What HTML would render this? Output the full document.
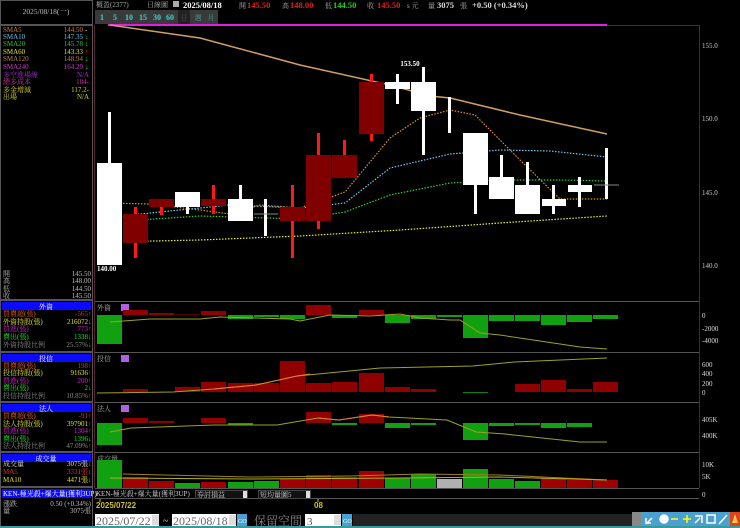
<!DOCTYPE html><html><head><meta charset="utf-8"><style>
html,body{margin:0;padding:0;background:#000;width:740px;height:528px;overflow:hidden}
svg{display:block}
text{font-family:"Liberation Serif","Noto Serif CJK SC","Noto Sans CJK TC",serif}
.s{font-size:7px}
.b{font-family:"Liberation Sans","Noto Sans CJK TC",sans-serif;font-weight:bold}
</style></head><body>
<svg width="740" height="528" viewBox="0 0 740 528" xmlns="http://www.w3.org/2000/svg">
<rect width="740" height="528" fill="#000"/>
<g fill="none" stroke="#555" stroke-width="1">
<rect x="0.5" y="0.5" width="92" height="24"/>
<rect x="0.5" y="25.5" width="92" height="274"/>
<rect x="0.5" y="300.5" width="92" height="51"/>
<rect x="0.5" y="352.5" width="92" height="49"/>
<rect x="0.5" y="402.5" width="92" height="49"/>
<rect x="0.5" y="452.5" width="92" height="34"/>
<rect x="0.5" y="487.5" width="92" height="39"/>
</g>
<text x="46" y="14" fill="#bbb" font-size="7.5" text-anchor="middle">2025/08/18(一)</text>
<g class="s">
<text x="3" y="32" fill="#d07830">SMA5</text><text x="83" y="32" fill="#d07830" text-anchor="end">144.50</text><text x="85" y="32" fill="#ccc">-</text>
<text x="3" y="39" fill="#60c0e0">SMA10</text><text x="83" y="39" fill="#60c0e0" text-anchor="end">147.35</text><text x="85" y="39" fill="#0e0">↓</text>
<text x="3" y="46" fill="#30c030">SMA20</text><text x="83" y="46" fill="#30c030" text-anchor="end">145.78</text><text x="85" y="46" fill="#0e0">↓</text>
<text x="3" y="54" fill="#e0e020">SMA60</text><text x="83" y="54" fill="#e0e020" text-anchor="end">143.33</text><text x="85" y="54" fill="#f22">↑</text>
<text x="3" y="61" fill="#b08050">SMA120</text><text x="83" y="61" fill="#b08050" text-anchor="end">148.94</text><text x="85" y="61" fill="#0e0">↓</text>
<text x="3" y="69" fill="#c040c0">SMA240</text><text x="83" y="69" fill="#c040c0" text-anchor="end">164.29</text><text x="85" y="69" fill="#0e0">↓</text>
<text x="3" y="77" fill="#a030d0">多空進場線</text><text x="89" y="77" fill="#a030d0" text-anchor="end">N/A</text>
<text x="3" y="84" fill="#d030a0">總多成本</text><text x="89" y="84" fill="#d030a0" text-anchor="end">184-</text>
<text x="3" y="92" fill="#d0d030">多金增減</text><text x="89" y="92" fill="#d0d030" text-anchor="end">117.2-</text>
<text x="3" y="99" fill="#d0d030">出場</text><text x="89" y="99" fill="#d0d030" text-anchor="end">N/A</text>
<text x="3" y="276" fill="#bbb">開</text><text x="91" y="276" fill="#bbb" text-anchor="end">145.50</text>
<text x="3" y="283" fill="#bbb">高</text><text x="91" y="283" fill="#bbb" text-anchor="end">148.00</text>
<text x="3" y="291" fill="#bbb">低</text><text x="91" y="291" fill="#bbb" text-anchor="end">144.50</text>
<text x="3" y="298" fill="#bbb">收</text><text x="91" y="298" fill="#bbb" text-anchor="end">145.50</text>
</g>
<g fill="#0a0aff"><rect x="2" y="302" width="89" height="8"/><rect x="2" y="354" width="89" height="8"/><rect x="2" y="404" width="89" height="8"/><rect x="2" y="454" width="89" height="8"/><rect x="2" y="489" width="89" height="9"/></g>
<g class="s" text-anchor="middle" fill="#fff"><text x="46" y="309">外資</text><text x="46" y="361">投信</text><text x="46" y="411">法人</text><text x="46" y="461">成交量</text></g>
<text x="3" y="496" class="s" fill="#fff">KEN-極光殺+爆大量(獲利3UP)</text>
<g class="s">
<text x="3" y="316" fill="#e06020">買賣超(張)</text><text x="88" y="316" fill="#e03030" text-anchor="end">-565</text><text x="88" y="316" fill="#f22">↑</text>
<text x="3" y="324" fill="#e0e020">外資持股(張)</text><text x="88" y="324" fill="#e0e020" text-anchor="end">216072</text><text x="88" y="324" fill="#0e0">↓</text>
<text x="3" y="331" fill="#d020d0">買進(張)</text><text x="88" y="331" fill="#d020d0" text-anchor="end">773</text><text x="88" y="331" fill="#f22">↑</text>
<text x="3" y="339" fill="#20e020">賣出(張)</text><text x="88" y="339" fill="#20e020" text-anchor="end">1338</text><text x="88" y="339" fill="#0e0">↓</text>
<text x="3" y="347" fill="#888">外資持股比例</text><text x="88" y="347" fill="#888" text-anchor="end">25.57%</text><text x="88" y="347" fill="#0e0">↓</text>
<text x="3" y="368" fill="#e06020">買賣超(張)</text><text x="88" y="368" fill="#e03030" text-anchor="end">198</text><text x="88" y="368" fill="#f22">↑</text>
<text x="3" y="375" fill="#e0e020">投信持股(張)</text><text x="88" y="375" fill="#e0e020" text-anchor="end">91636</text><text x="88" y="375" fill="#f22">↑</text>
<text x="3" y="383" fill="#d020d0">買進(張)</text><text x="88" y="383" fill="#d020d0" text-anchor="end">200</text><text x="88" y="383" fill="#f22">↑</text>
<text x="3" y="390" fill="#20e020">賣出(張)</text><text x="88" y="390" fill="#20e020" text-anchor="end">2</text><text x="88" y="390" fill="#0e0">↓</text>
<text x="3" y="398" fill="#888">投信持股比例</text><text x="88" y="398" fill="#888" text-anchor="end">10.85%</text><text x="88" y="398" fill="#f22">↑</text>
<text x="3" y="418" fill="#e06020">買賣超(張)</text><text x="88" y="418" fill="#e03030" text-anchor="end">-91</text><text x="88" y="418" fill="#f22">↑</text>
<text x="3" y="426" fill="#e0e020">法人持股(張)</text><text x="88" y="426" fill="#e0e020" text-anchor="end">397901</text><text x="88" y="426" fill="#f22">↑</text>
<text x="3" y="433" fill="#d020d0">買進(張)</text><text x="88" y="433" fill="#d020d0" text-anchor="end">1304</text><text x="88" y="433" fill="#f22">↑</text>
<text x="3" y="441" fill="#20e020">賣出(張)</text><text x="88" y="441" fill="#20e020" text-anchor="end">1396</text><text x="88" y="441" fill="#0e0">↓</text>
<text x="3" y="448" fill="#888">法人持股比例</text><text x="88" y="448" fill="#888" text-anchor="end">47.09%</text><text x="88" y="448" fill="#f22">↑</text>
<text x="3" y="466" fill="#ddd">成交量</text><text x="88" y="466" fill="#ddd" text-anchor="end">3075張</text><text x="88" y="466" fill="#0e0">↓</text>
<text x="3" y="474" fill="#e03030">MA5</text><text x="88" y="474" fill="#e03030" text-anchor="end">3331張</text><text x="88" y="474" fill="#0e0">↓</text>
<text x="3" y="482" fill="#e0e020">MA10</text><text x="88" y="482" fill="#e0e020" text-anchor="end">4471張</text><text x="88" y="482" fill="#0e0">↓</text>
<text x="3" y="506" fill="#bbb">漲跌</text><text x="91" y="506" fill="#bbb" text-anchor="end">0.50 (+0.34%)</text>
<text x="3" y="513" fill="#bbb">量</text><text x="91" y="513" fill="#bbb" text-anchor="end">3075張</text>
</g>
<!-- header -->
<g class="s" fill="#aaa">
<text x="96" y="7">概盈(2377)</text><text x="147" y="7">日線圖</text>
</g>
<rect x="173" y="1" width="6" height="6" fill="#aaa"/>
<g font-size="8.5" class="b">
<text x="183" y="8" fill="#fff">2025/08/18</text>
<text x="247" y="8" fill="#e02020">145.50</text>
<text x="290" y="8" fill="#e02020">148.00</text>
<text x="333" y="8" fill="#20d020">144.50</text>
<text x="377" y="8" fill="#e02020">145.50</text>
<text x="437" y="8" fill="#ddd">3075</text>
<text x="472" y="8" fill="#ddd">+0.50 (+0.34%)</text>
</g>
<g class="s" fill="#aaa"><text x="239" y="8">開</text><text x="282" y="8">高</text><text x="325" y="8">低</text><text x="367" y="8">收</text><text x="407" y="8">s 元</text><text x="428" y="8">量</text><text x="460" y="8">張</text></g>
<rect x="95" y="10" width="123" height="14" fill="#3a3a3a"/>
<rect x="178" y="10" width="12" height="14" fill="#222"/>
<g font-size="8" class="b" fill="#40d0d0" text-anchor="middle">
<text x="102" y="20">1</text><text x="115" y="20">5</text><text x="129" y="20">10</text><text x="143" y="20">15</text><text x="157" y="20">30</text><text x="170" y="20">60</text>
</g>
<g class="s" fill="#40a0a0" text-anchor="middle"><text x="184" y="20" fill="#555">日</text><text x="198" y="20">週</text><text x="211" y="20">月</text></g>
<g fill="none" stroke="#5a2030" stroke-width="1">
<line x1="94.5" y1="25" x2="94.5" y2="488"/>
<line x1="699.5" y1="25" x2="699.5" y2="488"/>
<line x1="607" y1="25.5" x2="699" y2="25.5"/>
</g>
<g stroke="#555"><line x1="95" y1="301.5" x2="699" y2="301.5"/><line x1="95" y1="352.5" x2="699" y2="352.5"/><line x1="95" y1="402.5" x2="699" y2="402.5"/><line x1="95" y1="452.5" x2="699" y2="452.5"/><line x1="95" y1="488.5" x2="699" y2="488.5"/><line x1="95" y1="498.5" x2="699" y2="498.5"/></g>
<line x1="108" y1="25" x2="607" y2="25" stroke="#e020e0" stroke-width="2"/>
<g class="s" fill="#ccc"><text x="702" y="48">155.0</text><text x="702" y="121">150.0</text><text x="702" y="195">145.0</text><text x="702" y="268">140.0</text></g>
<polyline fill="none" stroke="#d0a060" stroke-width="1.5" points="110,25 200,38 300,65 390,85 430,96 450,98 520,115 607,134"/>
<g fill="none" stroke-width="1.2" stroke-dasharray="1.5,1.5">
<polyline stroke="#e09030" points="108,203 150,204 200,210 230,214 260,205 300,208 345,192 390,138 420,118 450,110 475,115 520,160 560,199 607,199"/>
<polyline stroke="#70c8f0" points="108,219 140,214 200,208 230,205 300,208 345,203 390,168 450,154 500,150 550,151 607,157"/>
<polyline stroke="#30d030" points="108,222 200,216 300,219 345,212 390,195 450,183 500,180 560,180 607,181"/>
<polyline stroke="#f0f020" points="108,242 200,240 300,236 400,230 500,223 607,216"/>
</g>
<g fill="#fff">
<rect x="108" y="112" width="3" height="51"/><rect x="97" y="163" width="25" height="102"/>
<rect x="186" y="207" width="3" height="7"/><rect x="175" y="192" width="25" height="15"/>
<rect x="239" y="185" width="3" height="14"/><rect x="228" y="199" width="25" height="22"/>
<rect x="264" y="199" width="3" height="37"/>
<rect x="396" y="74" width="3" height="30"/><rect x="385" y="82" width="25" height="7"/>
<rect x="422" y="67" width="3" height="88"/><rect x="411" y="82" width="25" height="29"/>
<rect x="448" y="97" width="3" height="36"/>
<rect x="474" y="185" width="3" height="29"/><rect x="463" y="133" width="25" height="52"/>
<rect x="500" y="155" width="3" height="22"/><rect x="489" y="177" width="25" height="22"/>
<rect x="526" y="162" width="3" height="23"/><rect x="515" y="185" width="25" height="29"/>
<rect x="552" y="185" width="3" height="29"/><rect x="542" y="199" width="24" height="7"/>
<rect x="578" y="177" width="3" height="30"/><rect x="568" y="185" width="24" height="7"/>
<rect x="605" y="148" width="3" height="51"/>
</g>
<g fill="#ff1818">
<rect x="134" y="207" width="3" height="51"/><rect x="160" y="199" width="3" height="16"/>
<rect x="212" y="185" width="3" height="29"/><rect x="291" y="185" width="3" height="73"/>
<rect x="317" y="133" width="3" height="96"/><rect x="343" y="140" width="3" height="38"/>
<rect x="370" y="74" width="3" height="67"/>
</g>
<g fill="#800000">
<rect x="123" y="214" width="25" height="29"/><rect x="149" y="199" width="25" height="8"/>
<rect x="201" y="199" width="25" height="7"/><rect x="280" y="207" width="25" height="14"/>
<rect x="306" y="155" width="25" height="66"/><rect x="332" y="155" width="25" height="23"/>
<rect x="359" y="82" width="25" height="52"/>
</g>
<line x1="254" y1="214" x2="278" y2="214" stroke="#888"/><line x1="594" y1="185" x2="619" y2="185" stroke="#888"/>
<text x="97" y="271" class="s" fill="#fff" font-weight="bold">140.00</text>
<text x="410" y="66" class="s" fill="#fff" text-anchor="middle" font-weight="bold">153.50</text>
<g class="s" fill="#aaa"><text x="97" y="310">外資</text><text x="97" y="361">投信</text><text x="97" y="411">法人</text><text x="97" y="461">成交量</text></g>
<g fill="#b060e0"><rect x="121" y="304" width="8" height="7"/><rect x="121" y="355" width="8" height="7"/><rect x="121" y="405" width="8" height="7"/></g>
<g class="s" fill="#ddd" font-family="Liberation Sans"><text x="702" y="318">0</text><text x="702" y="331">-2000</text><text x="702" y="343">-4000</text>
<text x="702" y="367">600</text><text x="702" y="376">400</text><text x="702" y="386">200</text><text x="702" y="395">0</text>
<text x="702" y="422">405K</text><text x="702" y="438">400K</text>
<text x="702" y="467">10K</text><text x="702" y="479">5K</text><text x="702" y="497">0</text></g>
<g fill="#10a010">
<rect x="97" y="315" width="25" height="29"/><rect x="228" y="315" width="25" height="4"/><rect x="254" y="315" width="25" height="2"/><rect x="280" y="315" width="25" height="4"/><rect x="332" y="315" width="25" height="3"/><rect x="385" y="315" width="25" height="8"/><rect x="411" y="315" width="25" height="4"/><rect x="437" y="315" width="25" height="2"/><rect x="463" y="315" width="25" height="23"/><rect x="489" y="315" width="25" height="6"/><rect x="515" y="315" width="25" height="6"/><rect x="541" y="315" width="25" height="10"/><rect x="567" y="315" width="25" height="7"/><rect x="593" y="315" width="25" height="4"/>
</g>
<g fill="#900000"><rect x="123" y="310" width="25" height="5"/><rect x="149" y="313" width="25" height="2"/><rect x="201" y="311" width="25" height="4"/><rect x="306" y="305" width="25" height="10"/><rect x="359" y="310" width="25" height="5"/></g>
<rect x="175" y="314" width="25" height="1" fill="#500000"/>
<polyline fill="none" stroke="#a0a020" points="110,322 150,319 200,319 220,317 290,319 300,321 330,315 370,316 400,314 420,318 450,320 460,320 480,333 500,335 540,341 580,347 607,349"/>
<g fill="#900000"><rect x="123" y="389" width="25" height="3"/><rect x="175" y="387" width="25" height="5"/><rect x="201" y="382" width="25" height="10"/><rect x="228" y="383" width="25" height="9"/><rect x="254" y="383" width="25" height="9"/><rect x="280" y="361" width="25" height="31"/><rect x="306" y="383" width="25" height="9"/><rect x="332" y="382" width="25" height="10"/><rect x="359" y="373" width="25" height="19"/><rect x="385" y="387" width="25" height="5"/><rect x="411" y="389" width="25" height="3"/><rect x="515" y="384" width="25" height="8"/><rect x="541" y="380" width="25" height="12"/><rect x="567" y="389" width="25" height="3"/><rect x="593" y="382" width="25" height="10"/></g>
<rect x="463" y="392" width="25" height="1" fill="#108010"/>
<polyline fill="none" stroke="#a0a020" points="97,393 173,392 214,389 256,385 297,376 339,372 380,368 473,366 514,362 607,358"/>
<polyline fill="none" stroke="#e08030" points="214,389 256,385 297,376 310,374"/>
<g fill="#10a010"><rect x="97" y="423" width="25" height="22"/><rect x="228" y="423" width="25" height="2"/><rect x="332" y="423" width="25" height="2"/><rect x="385" y="423" width="25" height="5"/><rect x="411" y="423" width="25" height="2"/><rect x="463" y="423" width="25" height="17"/><rect x="489" y="423" width="25" height="3"/><rect x="515" y="423" width="25" height="2"/><rect x="541" y="423" width="25" height="5"/><rect x="567" y="423" width="25" height="4"/></g>
<g fill="#900000"><rect x="123" y="418" width="25" height="5"/><rect x="149" y="421" width="25" height="2"/><rect x="201" y="418" width="25" height="5"/><rect x="306" y="412" width="25" height="11"/><rect x="359" y="414" width="25" height="9"/></g>
<polyline fill="none" stroke="#a0a020" points="110,432 131,428 214,425 277,425 318,418 339,420 372,415 389,417 447,420 476,432 505,434 580,442 607,442"/>
<polyline fill="none" stroke="#e08030" points="318,418 339,420 372,415 389,417"/>
<g fill="#10a010"><rect x="97" y="460" width="25" height="28"/><rect x="175" y="483" width="25" height="5"/><rect x="228" y="482" width="25" height="6"/><rect x="254" y="481" width="25" height="7"/><rect x="385" y="478" width="25" height="10"/><rect x="411" y="474" width="25" height="14"/><rect x="463" y="469" width="25" height="19"/><rect x="489" y="479" width="25" height="9"/><rect x="515" y="481" width="25" height="7"/></g>
<g fill="#a00000"><rect x="123" y="477" width="25" height="11"/><rect x="149" y="481" width="25" height="7"/><rect x="201" y="482" width="25" height="6"/><rect x="280" y="479" width="25" height="9"/><rect x="306" y="475" width="25" height="13"/><rect x="332" y="477" width="25" height="11"/><rect x="359" y="471" width="25" height="17"/><rect x="541" y="478" width="25" height="10"/><rect x="567" y="480" width="25" height="8"/><rect x="593" y="480" width="25" height="8"/></g>
<rect x="437" y="479" width="25" height="9" fill="#b0b0b0"/>
<polyline fill="none" stroke="#a08020" points="123,474 250,477 350,476 420,474 500,475 607,480"/>
<polyline fill="none" stroke="#b0b020" points="110,478 250,479 400,478 500,477 607,480"/>
<text x="96" y="496" class="s" fill="#ccc">KEN-極光殺+爆大量(獲利3UP)</text>
<rect x="195.5" y="490.5" width="52" height="8" fill="#111" stroke="#444"/><text x="197" y="497" class="s" fill="#ccc">券討損益</text><rect x="243" y="491" width="4" height="7" fill="#ddd"/>
<rect x="258.5" y="490.5" width="52" height="8" fill="#111" stroke="#444"/><text x="260" y="497" class="s" fill="#ccc">短均量圖5</text><rect x="306" y="491" width="4" height="7" fill="#ddd"/>
<line x1="100" y1="499" x2="100" y2="502" stroke="#cc0"/><line x1="318" y1="499" x2="318" y2="502" stroke="#cc0"/>
<text x="96" y="508" font-size="8" class="b" fill="#d0c020">2025/07/22</text>
<text x="314" y="508" font-size="8" class="b" fill="#d0c020">08</text>
<rect x="95" y="514" width="64" height="12" fill="#fff"/><text x="96" y="525" font-size="12" fill="#666">2025/07/22</text><rect x="152" y="515" width="7" height="10" fill="#ddd"/>
<text x="163" y="524" font-size="10" fill="#ccc">~</text>
<rect x="172" y="514" width="64" height="12" fill="#fff"/><text x="173" y="525" font-size="12" fill="#666">2025/08/18</text><rect x="229" y="515" width="7" height="10" fill="#ddd"/>
<rect x="237" y="514" width="10" height="12" fill="#4aa0d0"/><text x="238" y="523" font-size="6" fill="#fff">GO</text>
<text x="254" y="525" font-size="12" fill="#888" font-family="Liberation Sans,Noto Sans CJK TC,sans-serif">保留空間</text>
<rect x="305" y="514" width="36" height="12" fill="#fff"/><text x="307" y="525" font-size="11" fill="#555">3</text><rect x="334" y="515" width="7" height="10" fill="#ddd"/>
<rect x="342" y="514" width="10" height="12" fill="#4aa0d0"/><text x="343" y="523" font-size="6" fill="#fff">GO</text>
<rect x="353" y="514" width="279" height="12" fill="#222"/>
<rect x="632" y="512" width="108" height="14" fill="#4aa0d0"/>
<rect x="632" y="512" width="9" height="14" fill="#888"/>
<g stroke="#fff" stroke-width="1.5" fill="none"><path d="M646 524 L652 518 M646 518 L646 523 L651 523"/><circle cx="664" cy="519" r="4" fill="#fff"/><line x1="671" y1="519" x2="678" y2="519" stroke="#ff0"/><line x1="683" y1="519" x2="691" y2="519" stroke="#ff0"/><line x1="687" y1="515" x2="687" y2="523" stroke="#ff0"/><path d="M695 516 L702 516 L702 523 M695 523 L700 518"/><rect x="707" y="515" width="8" height="8"/><path d="M719 524 L727 515"/></g>
<rect x="730" y="512" width="10" height="14" fill="#e04020"/><path d="M732 523 L735 514 L738 523 Z" fill="#ffd040"/>
<rect x="0" y="526" width="740" height="2" fill="#3a9a9a"/>
</svg>
</body></html>
